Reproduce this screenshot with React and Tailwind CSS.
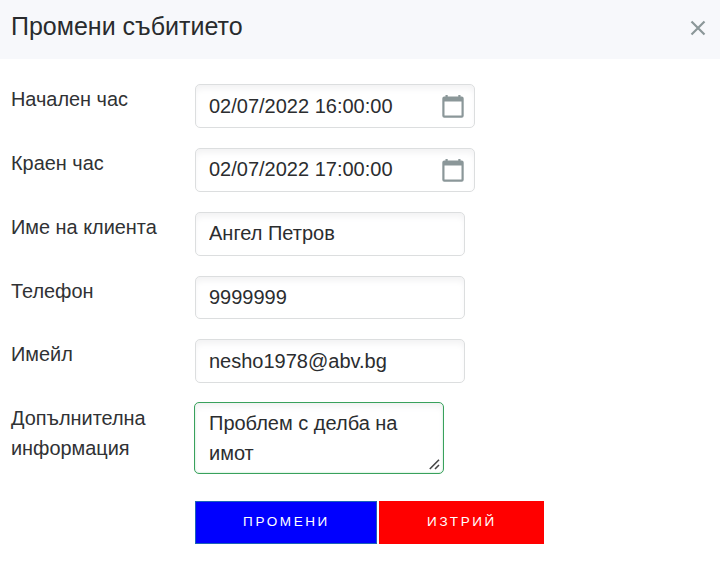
const fieldBox =
  'box-border rounded-[5px] border border-[#dcdedf] bg-white shadow-[inset_0_5px_6px_-1px_#f3f3f4] px-[13px] text-[20px] text-[#2b2d2f] outline-none';

function CalendarIcon() {
  return (
    <svg width="22" height="24" viewBox="0 0 22 24" className="shrink-0">
      <path
        fill="#8b9799"
        fillRule="evenodd"
        d="M3.5 1h2.2v1.6h10.6v-1.6h2.2v1.6h1.2a2 2 0 0 1 2 2v17.2a2 2 0 0 1-2 2h-17.4a2 2 0 0 1-2-2v-17.2a2 2 0 0 1 2-2h1.2zM2.5 7.5v14h17v-14z"
      />
    </svg>
  );
}

function Row({ label, height, children }) {
  return (
    <div className={`flex ${height}`}>
      <div className="w-[184px] shrink-0 text-[19.9px] leading-[30px] text-[#303234]">{label}</div>
      {children}
    </div>
  );
}

function DateField({ value, textClass = '' }) {
  return (
    <div className={`${fieldBox} flex h-[44px] w-[280px] items-center justify-between pr-[10px]`}>
      <span className={textClass}>{value}</span>
      <CalendarIcon />
    </div>
  );
}

function TextField({ value, height = 'h-[44px]', textClass = '' }) {
  return <input className={`${fieldBox} ${height} ${textClass} w-[270px]`} defaultValue={value} />;
}

export default function App() {
  return (
    <div className="h-[570px] w-[720px] overflow-hidden bg-white font-['Liberation_Sans',Arial,sans-serif]">
      <header className="flex h-[59px] items-center justify-between bg-[#f7f8fb] pr-[14px] pl-[11px]">
        <h1 className="pb-[8px] text-[25px] leading-[30px] text-[#292b2d]">Промени събитието</h1>
        <svg width="16" height="16" viewBox="0 0 16 16" className="mb-[3px]">
          <path d="M1.5 1.5l13 13M14.5 1.5l-13 13" stroke="#8b9799" strokeWidth="2.2" />
        </svg>
      </header>
      <main className="pt-[25px] pl-[11px]">
        <Row label="Начален час" height="h-[64px]">
          <DateField value="02/07/2022 16:00:00" />
        </Row>
        <Row label="Краен час" height="h-[64px]">
          <DateField value="02/07/2022 17:00:00" textClass="pb-[2px]" />
        </Row>
        <Row label="Име на клиента" height="h-[64px]">
          <TextField value="Ангел Петров" textClass="pb-[2px]" />
        </Row>
        <Row label="Телефон" height="h-[63px]">
          <TextField value="9999999" height="h-[43px]" />
        </Row>
        <Row label="Имейл" height="h-[64px]">
          <TextField value="nesho1978@abv.bg" />
        </Row>
        <Row label={<>Допълнителна<br />информация</>} height="h-[98px]">
          <div className="relative -mt-px -ml-px h-[72px] w-[250px] rounded-[5px] border border-[#38a15c] bg-white pt-[5px] pl-[14px] text-[20px] leading-[30px] text-[#2b2d2f] shadow-[inset_0_5px_6px_-1px_#f3f3f4,inset_0_0_2px_#9fdcb2]">
            Проблем с делба на
            <br />
            имот
            <svg width="11" height="11" viewBox="0 0 11 11" className="absolute right-[3px] bottom-[3px]">
              <path d="M0.8 10L10 0.8M6 10L10 6" stroke="#444" strokeWidth="1.6" />
            </svg>
          </div>
        </Row>
        <div className="flex gap-[2px] pl-[184px] text-[13.5px] tracking-[2.6px] text-white">
          <button className="h-[43px] w-[182px] border border-[#1c62b8] bg-[#0000ff] pl-px">ПРОМЕНИ</button>
          <button className="h-[43px] w-[165px] bg-[#ff0000] pl-px">ИЗТРИЙ</button>
        </div>
      </main>
    </div>
  );
}
